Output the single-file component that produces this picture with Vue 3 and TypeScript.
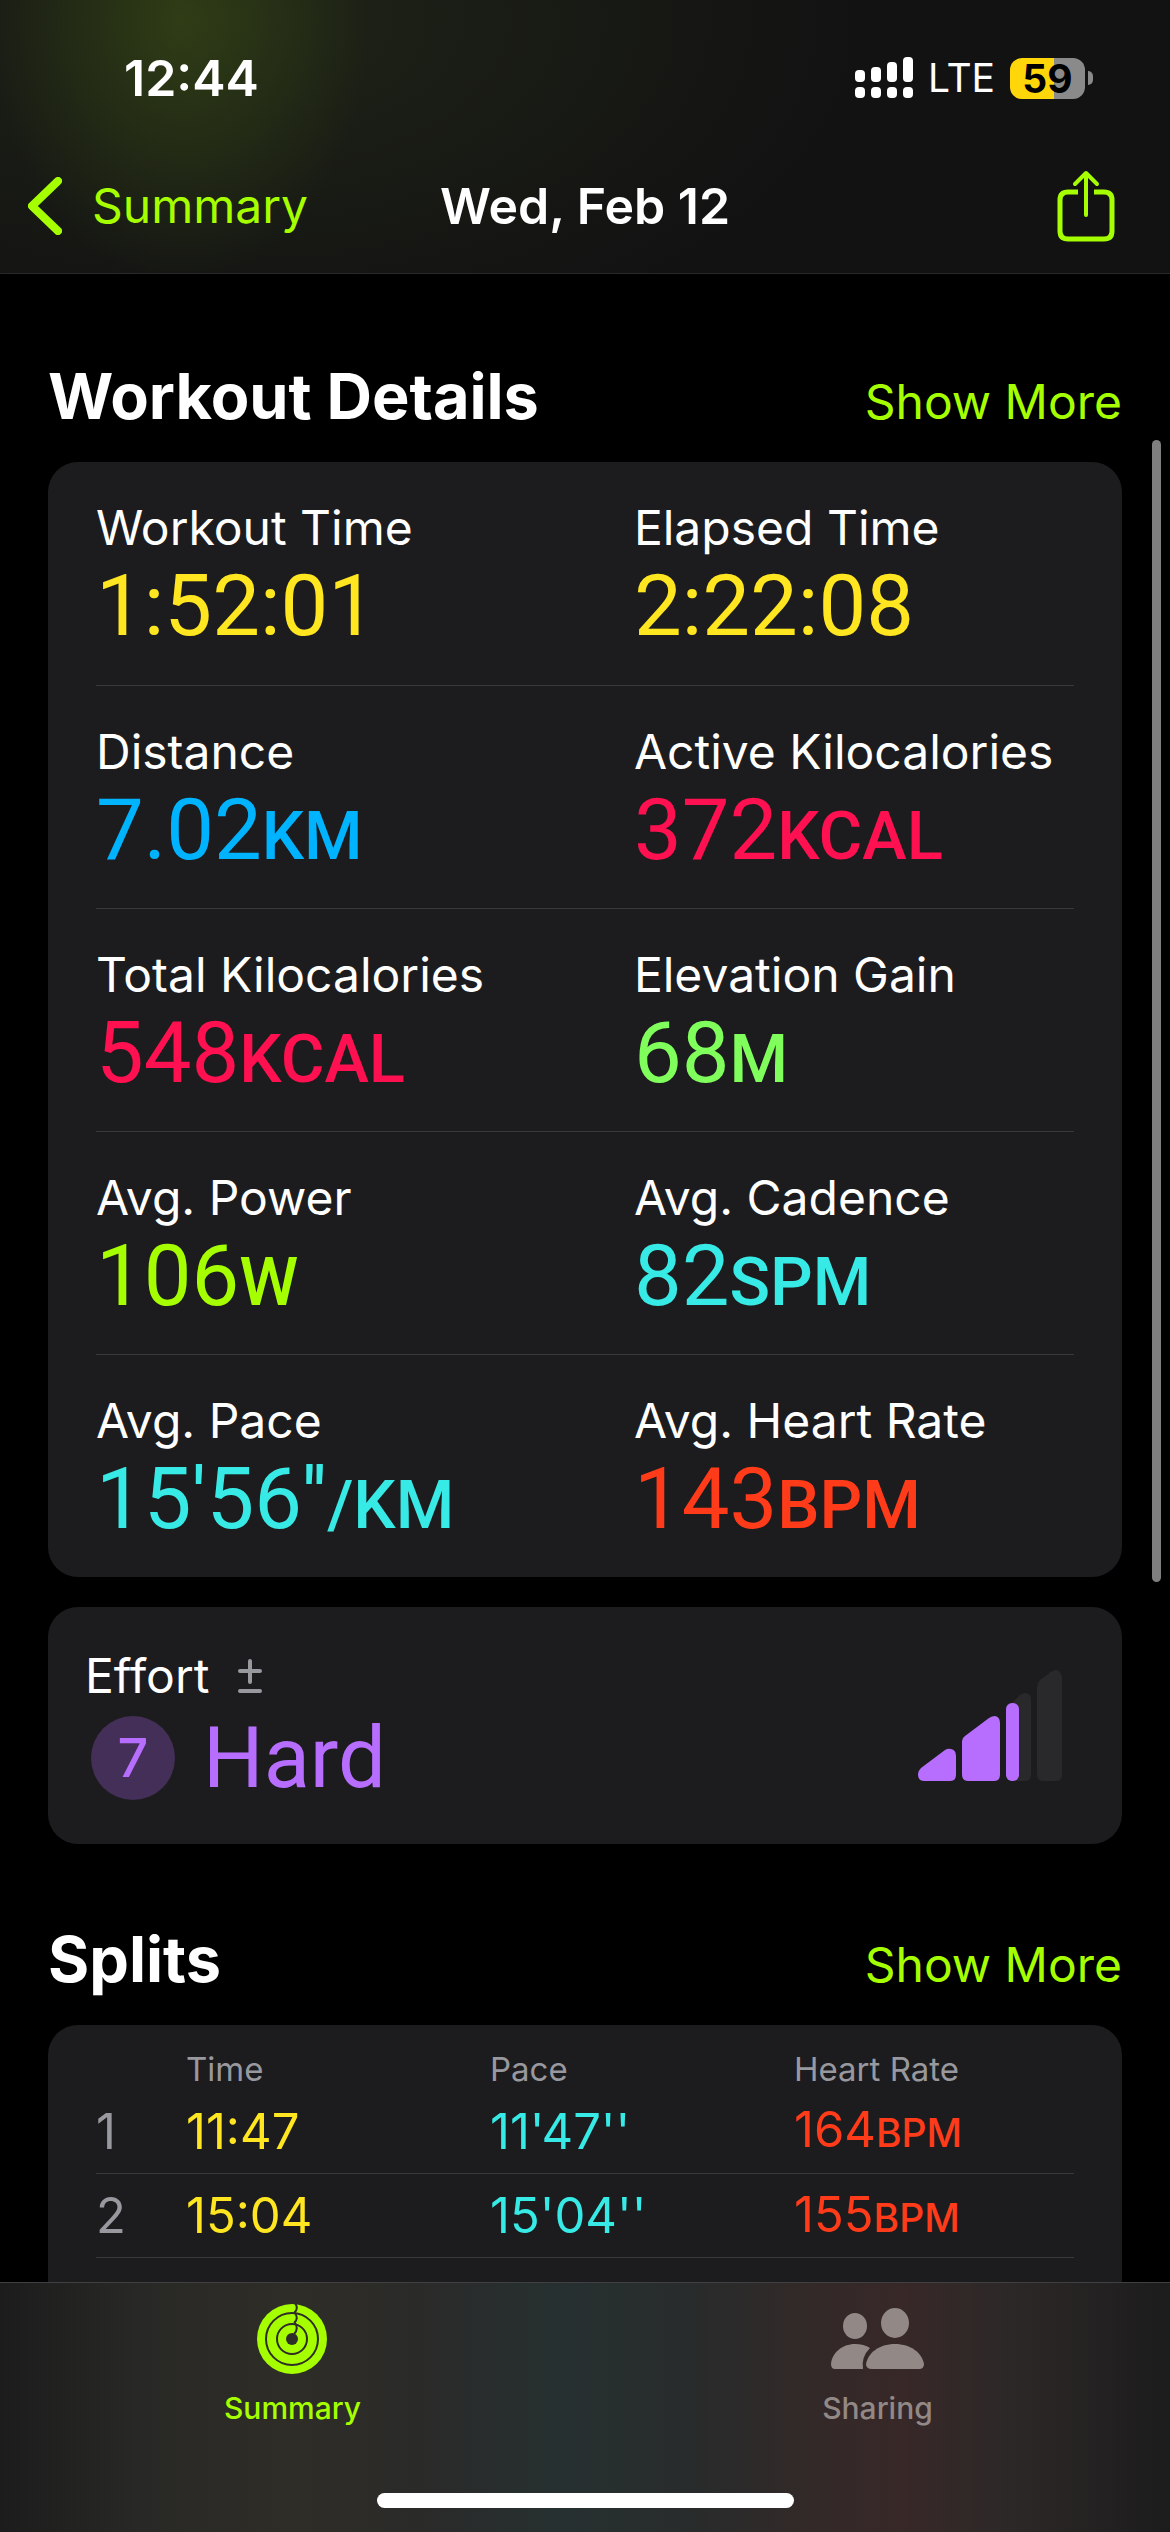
<script setup lang="ts">
interface Metric {
  label: string
  value: string
  unit?: string
  tone: string
}

interface Split {
  index: number
  time: string
  pace: string
  heartRate: number
}

const metricRows: Metric[][] = [
  [
    { label: 'Workout Time', value: '1:52:01', tone: 'yellow' },
    { label: 'Elapsed Time', value: '2:22:08', tone: 'yellow' },
  ],
  [
    { label: 'Distance', value: '7.02', unit: 'KM', tone: 'blue' },
    { label: 'Active Kilocalories', value: '372', unit: 'KCAL', tone: 'pink' },
  ],
  [
    { label: 'Total Kilocalories', value: '548', unit: 'KCAL', tone: 'pink' },
    { label: 'Elevation Gain', value: '68', unit: 'M', tone: 'green' },
  ],
  [
    { label: 'Avg. Power', value: '106', unit: 'W', tone: 'lime' },
    { label: 'Avg. Cadence', value: '82', unit: 'SPM', tone: 'cyan' },
  ],
  [
    { label: 'Avg. Pace', value: "15'56''", unit: '/KM', tone: 'cyan' },
    { label: 'Avg. Heart Rate', value: '143', unit: 'BPM', tone: 'red' },
  ],
]

const splits: Split[] = [
  { index: 1, time: '11:47', pace: "11'47''", heartRate: 164 },
  { index: 2, time: '15:04', pace: "15'04''", heartRate: 155 },
]
</script>

<template>
  <div class="screen">
    <header class="top">
      <div class="status">
        <time class="clock">12:44</time>
        <div class="indicators">
          <svg class="signal" width="58" height="42" viewBox="0 0 58 42" aria-hidden="true">
            <g fill="#fff">
              <rect x="0" y="13" width="10" height="12" rx="4" />
              <rect x="16" y="10" width="10" height="15" rx="4" />
              <rect x="32" y="5" width="10" height="20" rx="4" />
              <rect x="48" y="0" width="10" height="25" rx="4" />
              <rect x="0" y="30" width="10" height="11" rx="4" />
              <rect x="16" y="30" width="10" height="11" rx="4" />
              <rect x="32" y="30" width="10" height="11" rx="4" />
              <rect x="48" y="30" width="10" height="11" rx="4" />
            </g>
          </svg>
          <span class="network">LTE</span>
          <span class="battery">
            <span class="cell">59</span>
            <span class="nub"></span>
          </span>
        </div>
      </div>
      <nav class="navbar">
        <a class="back" href="#">
          <svg width="34" height="58" viewBox="0 0 34 58" aria-hidden="true">
            <path d="M30 4 L4 29 L30 54" fill="none" stroke="currentColor" stroke-width="8" stroke-linecap="round" stroke-linejoin="round" />
          </svg>
          <span>Summary</span>
        </a>
        <h1 class="title">Wed, Feb 12</h1>
        <button class="share" type="button" aria-label="Share">
          <svg width="58" height="72" viewBox="0 0 58 72" aria-hidden="true">
            <g fill="none" stroke="currentColor" stroke-width="5" stroke-linejoin="round">
              <path d="M21 22 H11 Q3 22 3 30 V61 Q3 69 11 69 H47 Q55 69 55 61 V30 Q55 22 47 22 H37" />
              <path d="M29 4 V45 M18 14 L29 3 L40 14" stroke-width="4" stroke-linecap="round" />
            </g>
          </svg>
        </button>
      </nav>
    </header>

    <main class="content">
      <section>
        <div class="heading">
          <h2>Workout Details</h2>
          <a href="#">Show More</a>
        </div>
        <div class="card metrics">
          <div v-for="(row, i) in metricRows" :key="i" class="metric-row">
            <div v-for="metric in row" :key="metric.label">
              <div class="label">{{ metric.label }}</div>
              <div class="value" :class="metric.tone">{{ metric.value }}<span v-if="metric.unit" class="unit">{{ metric.unit }}</span></div>
            </div>
          </div>
        </div>
      </section>

      <section class="card effort">
        <div class="effort-info">
          <div class="effort-title">
            <span class="label">Effort</span>
            <svg width="26" height="36" viewBox="0 0 26 36" aria-hidden="true">
              <path d="M3 13 H23 M13 3 V24 M3 33 H23" fill="none" stroke="#98989f" stroke-width="4" stroke-linecap="round" />
            </svg>
          </div>
          <div class="effort-level">
            <span class="badge">7</span>
            <span class="value purple">Hard</span>
          </div>
        </div>
        <svg class="effort-bars" width="144" height="112" viewBox="0 0 144 112" aria-hidden="true">
          <g fill="#29292b">
            <path d="M88 104 V43 Q88 39 91 36 L102 25 Q105 23 108 23 Q113 24 113 29 V105 Q113 111 107 111 H94 Q88 111 88 104 Z" />
            <path d="M119 104 V17 Q119 13 122 10 L133 2 Q135 0 138 0 Q143 1 144 7 V105 Q144 111 138 111 H125 Q119 111 119 104 Z" />
          </g>
          <g fill="#b76eff">
            <path d="M0 104 Q0 101 3 98 L27 80 Q30 78 33 79 Q38 80 38 86 V105 Q38 111 32 111 H6 Q0 111 0 104 Z" />
            <path d="M44 104 V71 Q44 68 47 66 L71 48 Q74 46 77 46 Q82 47 82 53 V105 Q82 111 76 111 H50 Q44 111 44 104 Z" />
            <rect x="88" y="33" width="13" height="78" rx="6" />
          </g>
        </svg>
      </section>

      <section class="splits">
        <div class="heading">
          <h2>Splits</h2>
          <a href="#">Show More</a>
        </div>
        <div class="card splits-card">
          <table>
            <thead>
              <tr>
                <th class="index"></th>
                <th>Time</th>
                <th>Pace</th>
                <th class="rate">Heart Rate</th>
              </tr>
            </thead>
            <tbody>
              <tr v-for="split in splits" :key="split.index">
                <td class="muted">{{ split.index }}</td>
                <td class="yellow">{{ split.time }}</td>
                <td class="cyan">{{ split.pace }}</td>
                <td class="red">{{ split.heartRate }}<span class="unit">BPM</span></td>
              </tr>
            </tbody>
          </table>
        </div>
      </section>
    </main>

    <footer class="bottom">
      <nav class="tabs">
        <a class="tab active" href="#">
          <svg width="94" height="72" viewBox="0 0 94 72" aria-hidden="true">
            <circle cx="46" cy="36" r="35" fill="currentColor" />
            <g fill="none" stroke="#2e2d27" stroke-width="2">
              <circle cx="46" cy="36" r="26" />
              <circle cx="46" cy="36" r="15" />
              <path d="M49 0 Q53 6 48 10 M49 10 Q53 16 48 20 M49 20 Q53 26 48 31" />
            </g>
            <circle cx="46" cy="36" r="6" fill="#2e2d27" />
          </svg>
          <span>Summary</span>
        </a>
        <a class="tab" href="#">
          <svg width="94" height="72" viewBox="0 0 94 72" aria-hidden="true">
            <g fill="currentColor">
              <ellipse cx="24" cy="23" rx="12" ry="13" />
              <ellipse cx="64" cy="20" rx="14" ry="15" />
              <path d="M4 66 Q0 66 0 61 C1 50 11 41 24 41 Q33 41 39 45 Q30 54 32 66 Z" />
              <path d="M41 66 Q35 66 35 61 C37 50 48 41 64 41 C80 41 91 50 93 61 Q93 66 88 66 Z" />
            </g>
          </svg>
          <span>Sharing</span>
        </a>
      </nav>
      <div class="home"></div>
    </footer>
    <div class="scrollbar"></div>
  </div>
</template>

<style>
body {
  background: #000;
}
</style>

<style scoped>
.screen {
  position: relative;
  display: flex;
  flex-direction: column;
  height: 100vh;
  overflow: hidden;
  background: #000;
  color: #fff;
  font-family: Inter, "Liberation Sans", sans-serif;
  font-size: 48px;
  line-height: 60px;
}

h1,
h2 {
  margin: 0;
}

a {
  color: #a6ff00;
  text-decoration: none;
}

.top {
  box-sizing: border-box;
  height: 274px;
  border-bottom: 1px solid #29292a;
  background:
    radial-gradient(ellipse 190px 260px at 180px 20px, rgba(72, 100, 20, 0.4), transparent),
    radial-gradient(ellipse 620px 340px at 240px 20px, rgba(50, 62, 30, 0.4), transparent),
    #121212;
}

.status {
  display: flex;
  align-items: center;
  justify-content: space-between;
  padding: 48px 77px 0 124px;
}

.clock {
  font-size: 50px;
  font-weight: 600;
}

.indicators {
  display: flex;
  align-items: center;
  gap: 15px;
}

.network {
  font-size: 39px;
  font-weight: 400;
}

.battery {
  display: flex;
  align-items: center;
  gap: 3px;
}

.cell {
  width: 75px;
  border-radius: 12px;
  background: linear-gradient(to right, #ffd60a 59%, #8a8a8a 59%);
  color: #000;
  font-size: 39px;
  font-weight: 700;
  line-height: 41px;
  text-align: center;
}

.nub {
  width: 5px;
  height: 14px;
  border-radius: 0 5px 5px 0;
  background: #8a8a8a;
}

.navbar {
  display: grid;
  grid-template-columns: 1fr auto 1fr;
  align-items: center;
  padding: 62px 28px 0;
}

.back {
  display: flex;
  align-items: center;
  gap: 30px;
}

.title {
  font-size: 50px;
  font-weight: 600;
}

.share {
  justify-self: end;
  height: 72px;
  margin-right: 27px;
  padding: 0;
  border: 0;
  background: none;
  color: #a6ff00;
}

.content {
  display: flex;
  flex: 1;
  flex-direction: column;
  min-height: 0;
  padding: 82px 48px 0;
  overflow: hidden;
}

.heading {
  display: flex;
  align-items: baseline;
  justify-content: space-between;
  padding-bottom: 26px;
}

.heading h2 {
  font-size: 63px;
  font-weight: 700;
  line-height: 80px;
}

.card {
  border-radius: 30px;
  background: #1c1c1e;
}

.metrics {
  padding: 0 48px;
}

.metric-row {
  display: grid;
  grid-template-columns: 11fr 9fr;
  box-sizing: border-box;
  height: 223px;
  padding-top: 36px;
}

.metric-row + .metric-row {
  border-top: 1px solid #39393b;
}

.value {
  font-family: Roboto, "Liberation Sans", sans-serif;
  font-size: 85px;
  line-height: 96px;
}

.value .unit {
  font-size: 67px;
  font-weight: 500;
}

.yellow {
  color: #ffe620;
}

.blue {
  color: #00b3ff;
}

.pink {
  color: #ff1050;
}

.green {
  color: #80ff5c;
}

.lime {
  color: #a6ff00;
}

.cyan {
  color: #38eae6;
}

.red {
  color: #ff3b1a;
}

.purple {
  color: #b76eff;
}

.effort {
  display: flex;
  align-items: center;
  justify-content: space-between;
  height: 237px;
  margin-top: 30px;
  padding: 0 60px 0 37px;
}

.effort-info {
  display: flex;
  flex-direction: column;
  gap: 4px;
}

.effort-title {
  display: flex;
  align-items: center;
  gap: 28px;
}

.effort-level {
  display: flex;
  align-items: center;
  gap: 28px;
  padding: 0 6px;
}

.badge {
  width: 84px;
  border-radius: 50%;
  background: #432f57;
  color: #b76eff;
  font-size: 54px;
  font-weight: 500;
  line-height: 84px;
  text-align: center;
}

.splits {
  display: flex;
  flex: 1;
  flex-direction: column;
  padding-top: 75px;
}

.splits-card {
  flex: 1;
  padding: 24px 48px 0;
  border-radius: 30px 30px 0 0;
}

table {
  width: 100%;
  border-collapse: collapse;
  table-layout: fixed;
}

th {
  height: 40px;
  padding: 0;
  color: #98989f;
  font-size: 33px;
  font-weight: 400;
  line-height: 40px;
  text-align: left;
}

.index {
  width: 90px;
}

.rate {
  width: 280px;
}

td {
  box-sizing: border-box;
  height: 84px;
  padding: 2px 0 0;
  border-bottom: 1px solid #39393b;
  font-size: 49px;
}

td .unit {
  font-size: 39px;
  font-weight: 500;
}

.muted {
  color: #98989f;
}

.bottom {
  box-sizing: border-box;
  height: 250px;
  border-top: 1px solid #404042;
  background: linear-gradient(to right, #1c1c1c 0%, #282826 12%, #2e2d27 25%, #2a2a29 36%, #263030 48%, #292b2b 60%, #332928 70%, #382828 77%, #2d2828 86%, #1c1c1c 100%);
}

.tabs {
  display: grid;
  grid-template-columns: 1fr 1fr;
  padding: 20px 0 0;
}

.tab {
  display: flex;
  flex-direction: column;
  align-items: center;
  gap: 15px;
  color: #928886;
  font-size: 30px;
  font-weight: 500;
  line-height: 36px;
}

.active {
  color: #a6ff00;
}

.home {
  width: 417px;
  height: 15px;
  margin: 67px auto 0;
  border-radius: 8px;
  background: #fff;
}

.scrollbar {
  position: absolute;
  top: 440px;
  right: 9px;
  width: 9px;
  height: 1142px;
  border-radius: 5px;
  background: #7f7f7f;
}
</style>
